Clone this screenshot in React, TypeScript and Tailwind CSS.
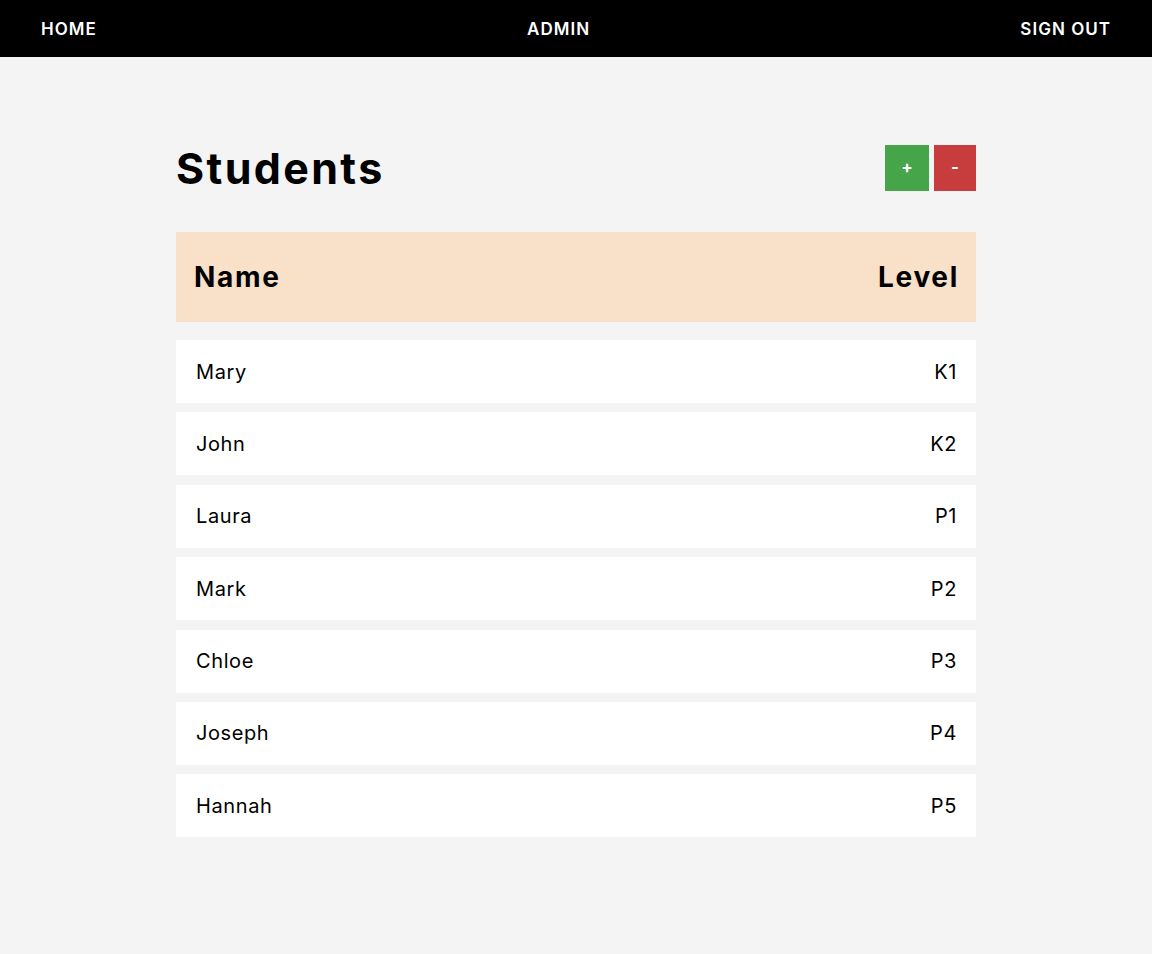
import React from "react";

const students = [
  { name: "Mary", level: "K1" },
  { name: "John", level: "K2" },
  { name: "Laura", level: "P1" },
  { name: "Mark", level: "P2" },
  { name: "Chloe", level: "P3" },
  { name: "Joseph", level: "P4" },
  { name: "Hannah", level: "P5" },
];

export default function App() {
  return (
    <div
      className="min-h-[954px] bg-[#f4f4f4] text-black"
      style={{ fontFamily: "Inter, 'Open Sans', sans-serif" }}
    >
      <nav className="h-[57px] bg-black flex items-center justify-between px-[41px] pt-[2px] text-white text-[17px] font-semibold tracking-[0.06em]">
        <a>HOME</a>
        <a>ADMIN</a>
        <a>SIGN OUT</a>
      </nav>
      <main className="w-[800px] mx-auto pt-[88px]">
        <div className="flex items-center justify-between">
          <h1 className="text-[43px] font-bold leading-none tracking-[0.055em]">Students</h1>
          <div className="flex gap-[5px]">
            <button className="w-[44px] h-[46px] bg-[#45a548] text-white font-bold text-[17px]">+</button>
            <button className="w-[42px] h-[46px] bg-[#c73c3c] text-white font-bold text-[17px]">-</button>
          </div>
        </div>
        <div className="mt-[41px] h-[90px] bg-[#f8e0c9] flex items-center justify-between pl-[18px] pr-[17px] text-[28px] font-bold tracking-[0.06em]">
          <span>Name</span>
          <span>Level</span>
        </div>
        <div className="mt-[18px] flex flex-col gap-[9.4px]">
          {students.map((s) => (
            <div
              key={s.name}
              className="h-[63px] bg-white flex items-center justify-between pl-[20px] pr-[19px] text-[20px] font-normal tracking-[0.03em]"
            >
              <span>{s.name}</span>
              <span>{s.level}</span>
            </div>
          ))}
        </div>
      </main>
    </div>
  );
}
